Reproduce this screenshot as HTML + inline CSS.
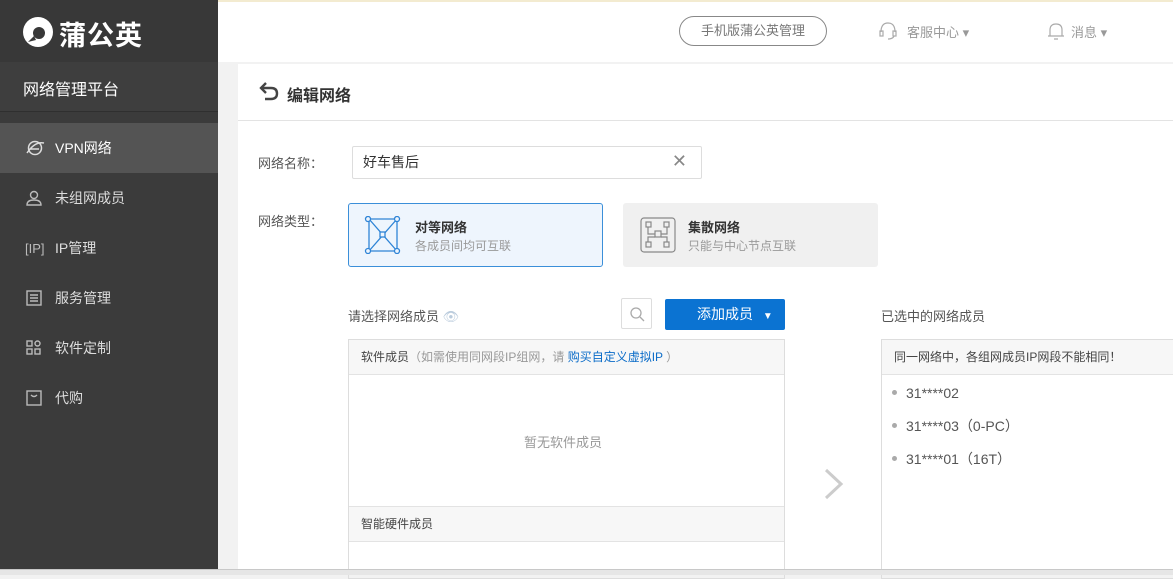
<!DOCTYPE html>
<html><head><meta charset="utf-8"><style>
*{margin:0;padding:0;box-sizing:border-box}
body{width:1173px;height:575px;overflow:hidden;font-family:"Liberation Sans","Noto Sans CJK SC",sans-serif;background:#f2f2f2;position:relative;color:#333}
.abs{position:absolute}
#side{left:0;top:0;width:218px;height:575px;background:#3b3b3b}
.nav{position:absolute;left:0;width:218px;height:50px;color:#ddd;font-size:14px;line-height:50px;padding-left:55px}
.nav svg{position:absolute;left:25px;top:16px}
.t13{font-size:13px}
.dot{display:inline-block;width:5px;height:5px;border-radius:50%;background:#aaa;margin-right:9px;vertical-align:middle;position:relative;top:-2px}
</style></head><body>
<div id="side" class="abs">
 <div class="abs" style="left:0;top:0;width:218px;height:62px;background:#383838"></div>
 <svg class="abs" style="left:22px;top:16px" width="32" height="32" viewBox="0 0 32 32"><circle cx="16" cy="16" r="15" fill="#fff"/><circle cx="17" cy="17" r="6" fill="#383838"/><path d="M6 26 L12 20 L14 24 Z" fill="#383838"/></svg>
 <div class="abs" style="left:59px;top:14px;font-size:27px;font-weight:bold;color:#fff;letter-spacing:1px">蒲公英</div>
 <div class="abs" style="left:0;top:62px;width:218px;height:50px;background:#3e3e3e;border-bottom:1px solid #2f2f2f"></div>
 <div class="abs" style="left:23px;top:76px;font-size:16px;color:#fff">网络管理平台</div>
 <div class="nav" style="top:123px;background:#545454;color:#fff"><svg width="20" height="18" viewBox="0 0 20 18" fill="none" stroke="#ddd" stroke-width="1.5"><circle cx="10" cy="9" r="6.5"/><path d="M2 14 Q10 2 19 4 M5 10 L14 10"/></svg>VPN网络</div>
 <div class="nav" style="top:173px"><svg width="18" height="18" viewBox="0 0 18 18" fill="none" stroke="#bbb" stroke-width="1.4"><circle cx="9" cy="6" r="3.5"/><path d="M2 16 Q2 11 9 11 Q16 11 16 16 Z"/></svg>未组网成员</div>
 <div class="nav" style="top:223px"><svg width="20" height="18" viewBox="0 0 20 18"><text x="0" y="14" font-size="13" fill="#bbb" font-family="Liberation Sans">[IP]</text></svg>IP管理</div>
 <div class="nav" style="top:273px"><svg width="18" height="18" viewBox="0 0 18 18" fill="none" stroke="#bbb" stroke-width="1.4"><rect x="2" y="2" width="14" height="14"/><path d="M5 6h8M5 9h8M5 12h8"/></svg>服务管理</div>
 <div class="nav" style="top:323px"><svg width="18" height="18" viewBox="0 0 18 18" fill="none" stroke="#bbb" stroke-width="1.4"><rect x="2" y="2" width="5" height="5"/><rect x="2" y="10" width="5" height="5"/><rect x="10" y="10" width="5" height="5"/><circle cx="12.5" cy="4.5" r="2.5"/></svg>软件定制</div>
 <div class="nav" style="top:373px"><svg width="18" height="18" viewBox="0 0 18 18" fill="none" stroke="#bbb" stroke-width="1.4"><rect x="2" y="2" width="14" height="14"/><path d="M6 6 Q9 9 12 6"/></svg>代购</div>
</div>
<div class="abs" style="left:218px;top:0;width:955px;height:62px;background:#fff;border-top:2px solid #f3ebd0"></div>
<div class="abs" style="left:679px;top:16px;width:148px;height:30px;border:1px solid #888;border-radius:15px;font-size:13px;color:#777;text-align:center;line-height:28px">手机版蒲公英管理</div>
<svg class="abs" style="left:879px;top:21px" width="18" height="20" viewBox="0 0 18 20" fill="none" stroke="#aaa" stroke-width="1.2"><path d="M2 11 Q2 2 9 2 Q16 2 16 11"/><rect x="1" y="10" width="3" height="5"/><rect x="14" y="10" width="3" height="5"/><path d="M15 15 Q14 18 9 18"/></svg>
<div class="abs" style="left:907px;top:22px;font-size:13px;color:#999">客服中心 ▾</div>
<svg class="abs" style="left:1047px;top:21px" width="18" height="20" viewBox="0 0 18 20" fill="none" stroke="#aaa" stroke-width="1.2"><path d="M3 15 L3 9 Q3 3 9 3 Q15 3 15 9 L15 15 Z M1 15 H17 M7 18 H11"/></svg>
<div class="abs" style="left:1071px;top:22px;font-size:13px;color:#999">消息 ▾</div>

<div class="abs" style="left:238px;top:64px;width:935px;height:511px;background:#fff"></div>
<div class="abs" style="left:238px;top:120px;width:935px;height:1px;background:#e3e3e3"></div>
<svg class="abs" style="left:258px;top:81px" width="22" height="20" viewBox="0 0 22 20" fill="none" stroke="#444" stroke-width="2.4"><path d="M4 7 H13 Q19 7 19 12.5 Q19 18 13 18 H7"/><path d="M8 2 L3 7 L8 12" /></svg>
<div class="abs" style="left:287px;top:82px;font-size:16px;color:#333;font-weight:bold">编辑网络</div>

<div class="abs t13" style="left:258px;top:153px;color:#555">网络名称：</div>
<div class="abs" style="left:352px;top:146px;width:350px;height:33px;border:1px solid #ddd;border-radius:2px;font-size:14px;line-height:31px;padding-left:10px;color:#333">好车售后<span style="position:absolute;right:14px;top:-1px;color:#888;font-size:18px">✕</span></div>

<div class="abs t13" style="left:258px;top:211px;color:#555">网络类型：</div>
<div class="abs" style="left:348px;top:203px;width:255px;height:64px;border:1px solid #3b8fd9;border-radius:3px;background:#eef5fd"></div>
<svg class="abs" style="left:364px;top:216px" width="38" height="38" viewBox="0 0 38 38" fill="none" stroke="#2f84d6" stroke-width="1.3"><path d="M5 3 L33 3 L33 35 L5 35 Z M5 3 L33 35 M33 3 L5 35"/><circle cx="4" cy="3" r="2.5" fill="#eef5fd"/><circle cx="33" cy="3" r="2.5" fill="#eef5fd"/><circle cx="4" cy="35" r="2.5" fill="#eef5fd"/><circle cx="33" cy="35" r="2.5" fill="#eef5fd"/><rect x="16" y="16" width="5" height="5" fill="#eef5fd"/></svg>
<div class="abs" style="left:415px;top:217px;font-size:13px;font-weight:bold;color:#333">对等网络</div>
<div class="abs" style="left:415px;top:237px;font-size:12px;color:#999">各成员间均可互联</div>
<div class="abs" style="left:623px;top:203px;width:255px;height:64px;border-radius:3px;background:#f0f0f0"></div>
<svg class="abs" style="left:640px;top:217px" width="36" height="36" viewBox="0 0 36 36" fill="none" stroke="#888" stroke-width="1.2"><rect x="1" y="1" width="34" height="34" rx="3"/><rect x="6" y="5" width="5" height="5"/><rect x="24" y="5" width="5" height="5"/><rect x="15" y="14" width="6" height="6"/><rect x="6" y="25" width="5" height="5"/><rect x="24" y="25" width="5" height="5"/><path d="M8 10 V17 H15 M27 10 V17 H21 M8 25 V20 H15 M27 25 V20 H21"/></svg>
<div class="abs" style="left:688px;top:217px;font-size:13px;font-weight:bold;color:#333">集散网络</div>
<div class="abs" style="left:688px;top:237px;font-size:12px;color:#999">只能与中心节点互联</div>

<div class="abs t13" style="left:348px;top:306px;color:#555">请选择网络成员 <span style="color:#bcd">👁</span></div>
<div class="abs" style="left:621px;top:298px;width:31px;height:31px;border:1px solid #ddd;border-radius:2px"><svg style="margin:7px" width="16" height="16" viewBox="0 0 16 16" fill="none" stroke="#aaa" stroke-width="1.3"><circle cx="7" cy="7" r="5"/><path d="M11 11 L15 15"/></svg></div>
<div class="abs" style="left:665px;top:299px;width:120px;height:31px;background:#0b73d2;border-radius:2px;color:#fff;font-size:14px;line-height:31px;padding-left:32px">添加成员 <span style="font-size:10px;margin-left:6px">▼</span></div>

<div class="abs" style="left:348px;top:339px;width:437px;height:240px;border:1px solid #ddd"></div>
<div class="abs" style="left:349px;top:340px;width:435px;height:35px;background:#f7f7f7;border-bottom:1px solid #e3e3e3;font-size:12px;line-height:35px;padding-left:12px;color:#444">软件成员<span style="color:#999">（如需使用同网段IP组网，请 </span><span style="color:#0b6cc8">购买自定义虚拟IP</span><span style="color:#999"> ）</span></div>
<div class="abs t13" style="left:524px;top:432px;color:#999">暂无软件成员</div>
<div class="abs" style="left:349px;top:506px;width:435px;height:36px;background:#f7f7f7;border-top:1px solid #e3e3e3;border-bottom:1px solid #e3e3e3;font-size:12px;line-height:35px;padding-left:12px;color:#444">智能硬件成员</div>

<svg class="abs" style="left:823px;top:468px" width="22" height="32" viewBox="0 0 22 32" fill="none" stroke="#ccc" stroke-width="3"><path d="M3 2 L18 16 L3 30"/></svg>

<div class="abs t13" style="left:881px;top:306px;color:#555">已选中的网络成员</div>
<div class="abs" style="left:881px;top:339px;width:300px;height:240px;border:1px solid #ddd"></div>
<div class="abs" style="left:882px;top:340px;width:291px;height:35px;background:#f7f7f7;border-bottom:1px solid #e3e3e3;font-size:12px;line-height:35px;padding-left:12px;color:#444">同一网络中，各组网成员IP网段不能相同！</div>
<div class="abs" style="left:892px;top:377px;font-size:14px;color:#555;line-height:33px"><div><span class="dot"></span>31****02</div><div><span class="dot"></span>31****03（0-PC）</div><div><span class="dot"></span>31****01（16T）</div></div>
<div class="abs" style="left:0;top:569px;width:1173px;height:6px;background:#e6e6e6;border-top:1px solid #c8c8c8"></div>
</body></html>
